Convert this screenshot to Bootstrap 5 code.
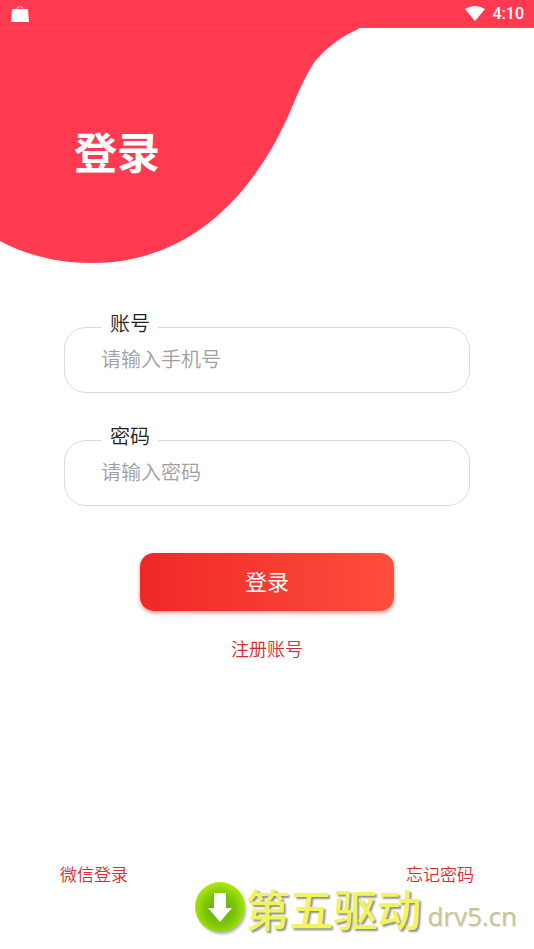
<!DOCTYPE html>
<html lang="zh-CN">
<head>
<meta charset="utf-8">
<meta name="viewport" content="width=device-width, initial-scale=1">
<title>登录</title>
<link href="https://cdn.jsdelivr.net/npm/bootstrap@5.3.0/dist/css/bootstrap.min.css" rel="stylesheet">
<style>
  body { font-family: "Noto Sans CJK SC", sans-serif; font-weight: 350; background: #fff; }
  .status-bar { height: 28px; background: #ff3a51; box-shadow: inset 0 -1px #fb4a5c; padding: 0 10px; }
  .status-time { font: 500 16px/28px Roboto, sans-serif; }
  .hero { height: 236px; padding: 90px 74px 0; }
  .hero-shape { z-index: -1; }
  .hero-title { font-size: 43px; line-height: 64px; }
  .login-form { padding: 63px 64px 0; }
  .field { height: 66px; border: 1px solid #dcdcdc; border-radius: 22px; margin-bottom: 47px; }
  .field-label { top: -20px; left: 37px; padding: 0 8px; font-size: 20px; line-height: 30px; color: #222; }
  .field-input { padding: 0 36px 4px; font-size: 20px; font-weight: 350; color: #333; outline: 0; }
  .field-input::placeholder { color: #a0a0a0; opacity: 1; }
  .submit { width: 254px; height: 58px; border-radius: 14px; padding: 0 0 3px; font-size: 22px; font-weight: 400; color: #fff;
    background: linear-gradient(90deg, #ee2828, #ff4e3b); box-shadow: 0 2px 4px rgba(240, 50, 50, .5); }
  .submit:hover { color: #fff; }
  .text-link { color: #d62c2c; font-size: 17px; line-height: 26px; }
  .register { font-size: 18px; margin-top: 24px; }
  .foot-links { padding: 0 60px; }
  .brand { height: 62px; padding: 0 17px 20px 0; }
  .brand-logo { width: 56px; height: 56px; margin-right: -3px; }
  .brand-name { font-size: 44px; line-height: 56px; font-weight: 500; color: #f1f45c; text-shadow: 2px 2px 2px #8e8e8e; }
  .brand-site { font: 26px/36px "Open Sans", sans-serif; color: #c5c591; text-shadow: 1px 1px 1px #ddd; margin: 16px 0 0 6px; }
</style>
<script src="https://cdn.jsdelivr.net/npm/bootstrap@5.3.0/dist/js/bootstrap.bundle.min.js"></script>
</head>
<body>
<div class="d-flex flex-column min-vh-100">
  <header class="status-bar d-flex align-items-center text-white">
    <svg width="20" height="20" viewBox="0 0 20 20" aria-hidden="true">
      <path d="M6.500 8V6q0-3.500 3.500-3.500T13.500 6v2" fill="none" stroke="#fff" stroke-opacity=".6"/>
      <path d="M3 5h14q1 0 1 1l1 12H1L2 6q0-1 1-1z" fill="#fff"/>
    </svg>
    <svg class="ms-auto me-2" width="20" height="16" viewBox="0 0 20 16" aria-hidden="true">
      <path d="M0 3Q10-3 20 3L10 15z" fill="#fff"/>
    </svg>
    <span class="status-time">4:10</span>
  </header>
  <section class="hero position-relative">
    <svg class="hero-shape position-absolute top-0 start-0 w-100 h-100" viewBox="0 0 534 236" preserveAspectRatio="none" aria-hidden="true">
      <path d="M0 0H360Q333 12 315 33C304 50 297 67 290 84C260 153 200 235 92 235C57 235 26 227 0 213z" fill="#ff3a51"/>
    </svg>
    <h1 class="hero-title fw-bold text-white m-0">登录</h1>
  </section>
  <main>
    <form class="login-form">
      <div class="field position-relative">
        <label class="field-label position-absolute bg-white" for="account">账号</label>
        <input class="field-input w-100 h-100 border-0 bg-transparent" id="account" type="tel" placeholder="请输入手机号">
      </div>
      <div class="field position-relative">
        <label class="field-label position-absolute bg-white" for="password">密码</label>
        <input class="field-input w-100 h-100 border-0 bg-transparent" id="password" type="password" placeholder="请输入密码">
      </div>
      <div class="d-flex flex-column align-items-center">
        <button class="submit btn border-0" type="submit">登录</button>
        <a class="text-link register text-decoration-none" href="#">注册账号</a>
      </div>
    </form>
  </main>
  <footer class="mt-auto">
    <nav class="foot-links d-flex justify-content-between">
      <a class="text-link text-decoration-none" href="#">微信登录</a>
      <a class="text-link text-decoration-none" href="#">忘记密码</a>
    </nav>
    <div class="brand d-flex justify-content-end align-items-center">
      <svg class="brand-logo" viewBox="0 0 56 56" aria-hidden="true">
        <defs>
          <radialGradient id="ball" cx=".5" cy=".55" r=".55">
            <stop offset="0" stop-color="#58a806"/><stop offset=".6" stop-color="#80c808"/><stop offset="1" stop-color="#b0ea0c"/>
          </radialGradient>
          <filter id="soft" x="-20%" y="-20%" width="140%" height="140%"><feGaussianBlur stdDeviation="1.500"/></filter>
        </defs>
        <circle cx="30" cy="30" r="24" fill="#888" opacity=".7" filter="url(#soft)"/>
        <circle cx="28" cy="27" r="25" fill="url(#ball)"/>
        <path d="M22 13h12v15h6L28 42 16 28h6z" fill="#fff"/>
      </svg>
      <span class="brand-name">第五驱动</span>
      <span class="brand-site">drv5.cn</span>
    </div>
  </footer>
</div>
</body>
</html>
